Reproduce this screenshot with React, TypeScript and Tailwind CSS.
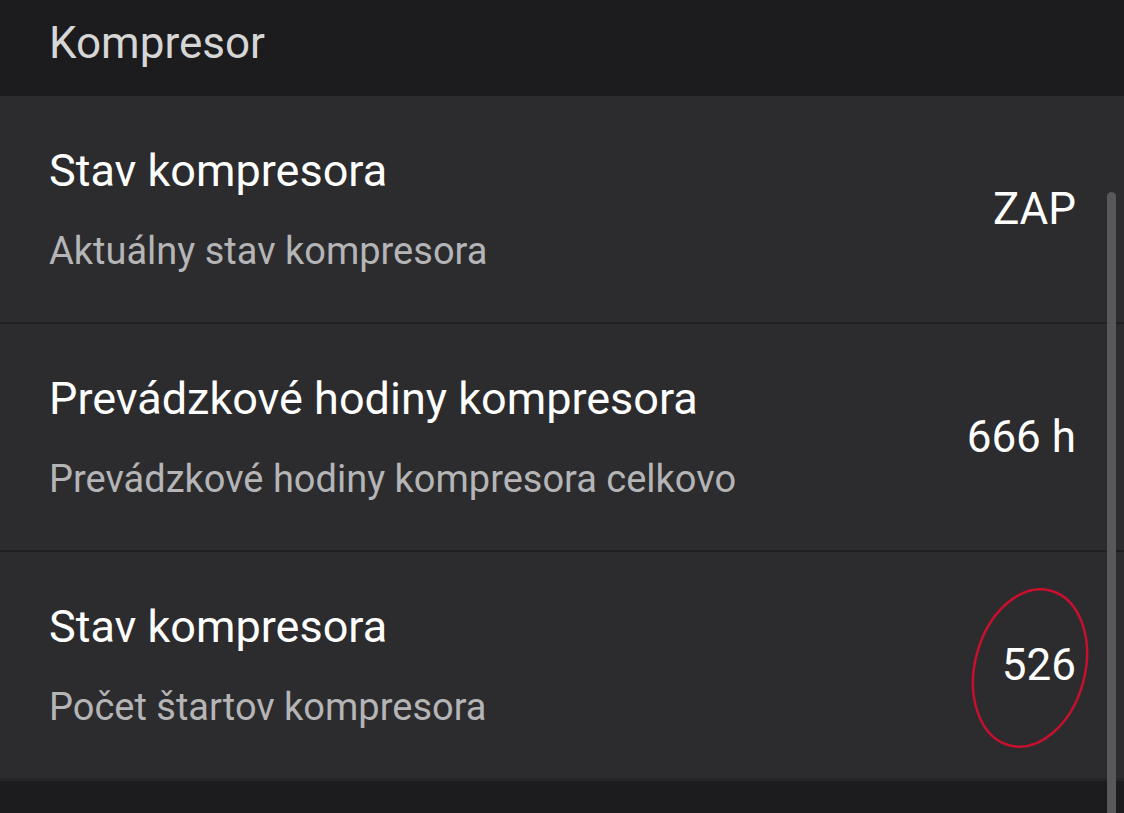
import React from "react";

interface Row {
  title: string;
  subtitle: string;
  value: string;
  marked?: boolean;
}

const rows: Row[] = [
  { title: "Stav kompresora", subtitle: "Aktuálny stav kompresora", value: "ZAP" },
  {
    title: "Prevádzkové hodiny kompresora",
    subtitle: "Prevádzkové hodiny kompresora celkovo",
    value: "666 h",
  },
  {
    title: "Stav kompresora",
    subtitle: "Počet štartov kompresora",
    value: "526",
    marked: true,
  },
];

export default function App() {
  return (
    <main
      className="relative w-[1124px] h-[813px] overflow-hidden bg-[#1c1c1e]"
      style={{ fontFamily: "Roboto, 'Noto Sans', sans-serif" }}
    >
      <header className="h-[96px] pl-[49px] pt-[16px]">
        <h1 className="text-[44px] leading-[54px] text-[#d6d6d6]">Kompresor</h1>
      </header>

      <div className="flex flex-col gap-[2px] bg-[#1f1f21] border-b-[3px] border-[#262628]">
        {rows.map((row, i) => (
          <div
            key={i}
            className="relative flex h-[226px] items-center justify-between bg-[#2c2c2e] pl-[49px] pr-[48px]"
          >
            <div className="flex flex-col pt-[4px]">
              <span className="text-[45px] leading-[52px] text-white">{row.title}</span>
              <span className="mt-[28px] text-[38px] leading-[52px] text-[#b5b5b7]">
                {row.subtitle}
              </span>
            </div>
            <span className="relative text-[44px] leading-[52px] text-white">
              {row.value}
              {row.marked && (
                <svg
                  className="absolute left-[-36px] top-[-58px]"
                  width="130"
                  height="175"
                  viewBox="0 0 130 175"
                >
                  <ellipse
                    cx="64"
                    cy="87"
                    rx="55"
                    ry="80"
                    fill="none"
                    stroke="#c8102e"
                    strokeWidth="2.5"
                    transform="rotate(15 64 87)"
                  />
                </svg>
              )}
            </span>
          </div>
        ))}
      </div>

      {/* overlay scrollbar */}
      <div className="absolute left-[1107px] top-[192px] h-[640px] w-[9px] rounded-full bg-[#58585a]" />
    </main>
  );
}
